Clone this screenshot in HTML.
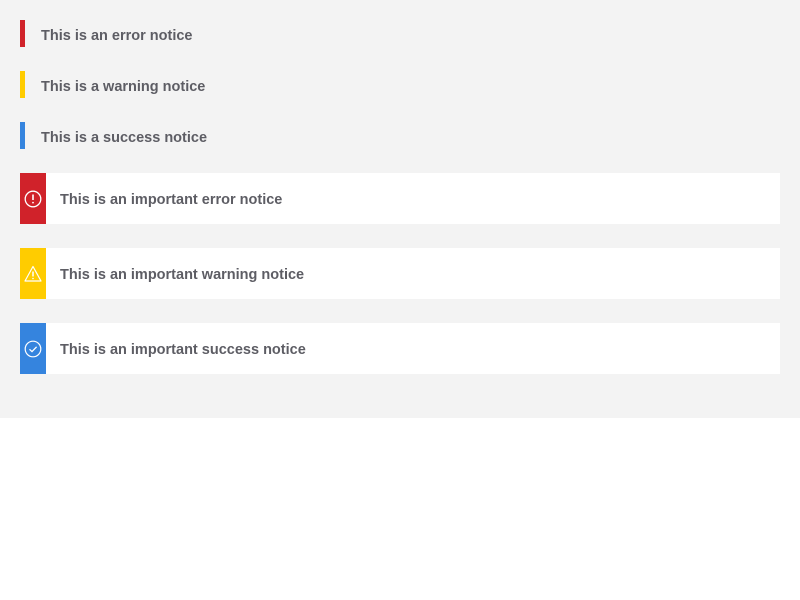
<!DOCTYPE html>
<html><head><style>
body{margin:0;background:#fff;font-family:"Liberation Sans",sans-serif;}
.wrap{background:#f3f3f3;height:418px;position:relative;}
.s{position:absolute;left:20px;height:27px;width:calc(100% - 40px);}
.s i{position:absolute;left:0;top:0;width:5px;height:27px;}
.t{position:absolute;font-weight:bold;font-size:14.5px;color:#5d5d64;letter-spacing:0;white-space:nowrap;}
.s .t{left:21px;top:8px;}
.b{position:absolute;left:20px;width:760px;height:51px;background:#fff;}
.b .ic{position:absolute;left:0;top:0;width:26px;height:51px;}
.b svg{position:absolute;left:4px;top:17px;}
.b .t{left:40px;top:19px;}
</style></head><body><div class="wrap">
<div class="s" style="top:20px"><i style="background:#d0222a"></i><span class="t">This is an error notice</span></div>
<div class="s" style="top:71px"><i style="background:#ffcc00"></i><span class="t">This is a warning notice</span></div>
<div class="s" style="top:122px"><i style="background:#3584de"></i><span class="t">This is a success notice</span></div>
<div class="b" style="top:173px"><div class="ic" style="background:#d0222a"><svg width="18" height="18" viewBox="0 0 18 18"><circle cx="9" cy="9" r="7.8" fill="none" stroke="#fff" stroke-width="1.3"/><path d="M9 4.5V10" stroke="#fff" stroke-width="1.6"/><circle cx="9" cy="12.6" r="0.9" fill="#fff"/></svg></div><span class="t">This is an important error notice</span></div>
<div class="b" style="top:248px"><div class="ic" style="background:#ffcc00"><svg width="18" height="18" viewBox="0 0 18 18"><path d="M9 1.5L17 16H1Z" fill="none" stroke="#fff" stroke-width="1.2" stroke-linejoin="round"/><path d="M9 6.5V11.5" stroke="#fff" stroke-width="1.5"/><circle cx="9" cy="13.5" r="0.8" fill="#fff"/></svg></div><span class="t">This is an important warning notice</span></div>
<div class="b" style="top:323px"><div class="ic" style="background:#3584de"><svg width="18" height="18" viewBox="0 0 18 18"><circle cx="9" cy="9" r="7.8" fill="none" stroke="#fff" stroke-width="1.2"/><path d="M5.5 9.3L8 11.6L12.6 6.8" fill="none" stroke="#fff" stroke-width="1.3"/></svg></div><span class="t">This is an important success notice</span></div>
</div></body></html>
